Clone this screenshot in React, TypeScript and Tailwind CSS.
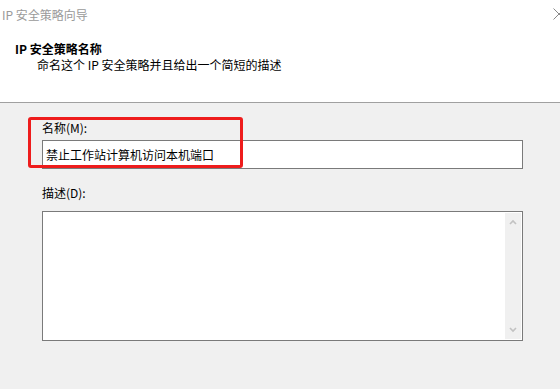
export default function App() {
  return (
    <div
      className="relative w-[560px] h-[389px] overflow-hidden bg-[#f0f0f0] text-[12px] leading-[16px] text-black"
      style={{ fontFamily: '"Noto Sans CJK SC", "Noto Sans", sans-serif' }}
    >
      {/* Header */}
      <div className="relative h-[103px] bg-white border-b border-[#a0a0a0] pt-[7px]">
        <div className="pl-[2px] text-[#9a9a9a]">IP 安全策略向导</div>
        <svg
          className="absolute left-[553px] top-[8px]"
          width="12"
          height="12"
          viewBox="0 0 12 12"
          fill="none"
          stroke="#8a8a8a"
          strokeWidth="1"
        >
          <path d="M0.5 0.5 L11.5 11.5 M11.5 0.5 L0.5 11.5" />
        </svg>
        <div className="mt-[18px] pl-[15px] font-bold">IP 安全策略名称</div>
        <div className="pl-[37px]">命名这个 IP 安全策略并且给出一个简短的描述</div>
      </div>

      {/* Body */}
      <div className="relative pl-[42px] pr-[37px] pt-[17px]">
        <div>名称(M):</div>
        <div className="mt-[4px] h-[29px] w-[481px] border border-[#7a7a7a] bg-white pl-[3px] flex items-center">
          禁止工作站计算机访问本机端口
        </div>

        <div className="mt-[16px]">描述(D):</div>
        <div className="mt-[10px] h-[130px] w-[481px] border border-[#7a7a7a] bg-white p-[1px] flex">
          <div className="flex-1" />
          <div className="w-[16px] bg-[#f0f0f0] flex flex-col items-center justify-between py-[6px]">
            <svg width="8" height="6" viewBox="0 0 8 6" fill="none" stroke="#c2c2c2" strokeWidth="1.6">
              <path d="M1 5 L4 2 L7 5" />
            </svg>
            <svg width="8" height="6" viewBox="0 0 8 6" fill="none" stroke="#c2c2c2" strokeWidth="1.6">
              <path d="M1 1 L4 4 L7 1" />
            </svg>
          </div>
        </div>

        {/* annotation highlight */}
        <div className="absolute left-[28px] top-[14px] w-[215px] h-[51px] border-[3px] border-[#ee1c1c] rounded-[3px]" />
      </div>
    </div>
  );
}
